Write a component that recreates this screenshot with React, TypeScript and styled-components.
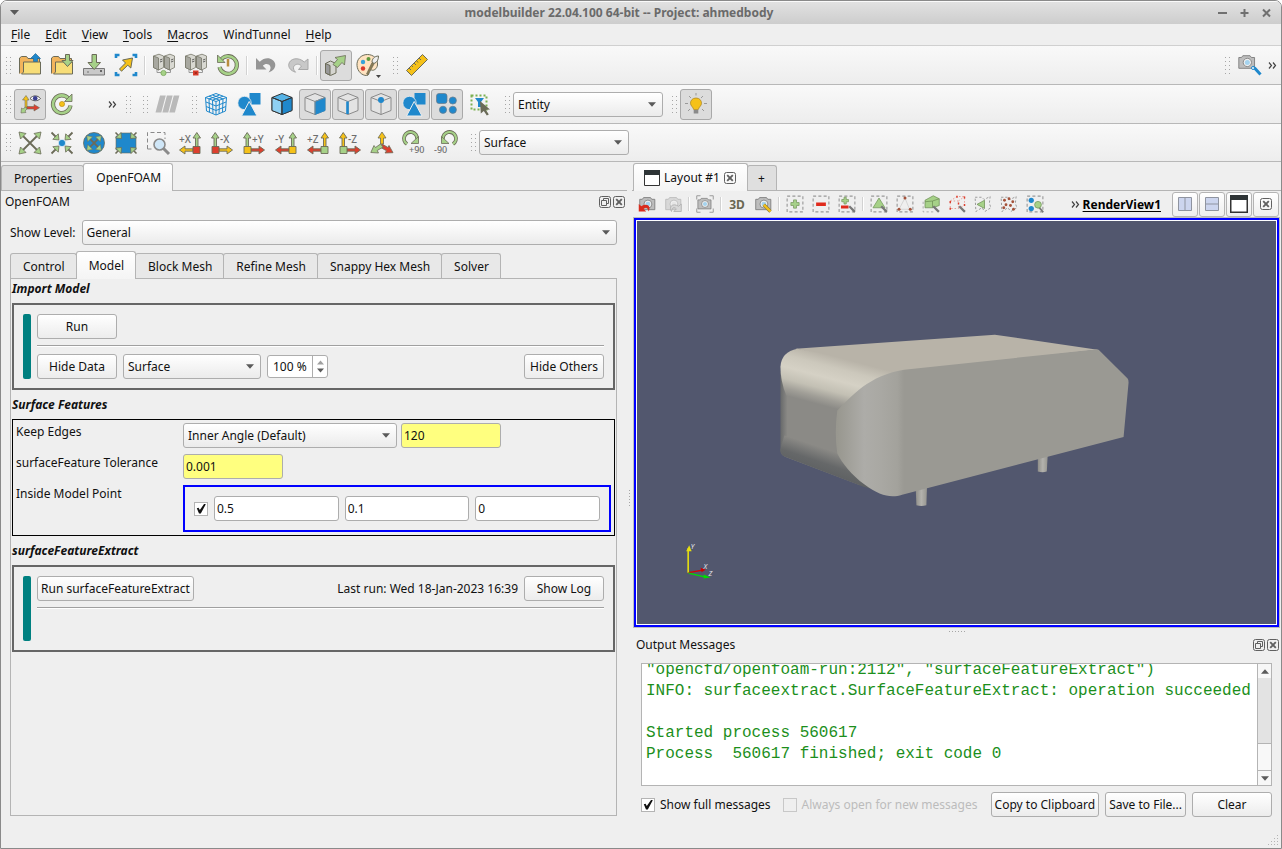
import React from "react";
import styled, { createGlobalStyle, css } from "styled-components";

const SANS = '"Noto Sans", "Open Sans", sans-serif';

const GlobalStyle = createGlobalStyle`
  *, *::before, *::after { box-sizing: border-box; }
  body { margin: 0; background: #fff; }
  body, button, input, select { font-family: ${SANS}; font-size: 12px; color: #111; }
`;

/* ---------- window chrome ---------- */

const Window = styled.div`
  display: flex;
  flex-direction: column;
  min-height: 100vh;
  background: #efefef;
  border: 1px solid #8a8a8a;
  border-radius: 7px 7px 0 0;
  overflow: hidden;
`;

const TitleBar = styled.header`
  display: grid;
  grid-template-columns: 36px 1fr 80px;
  align-items: center;
  height: 23px;
  padding: 0 9px;
  background: linear-gradient(#e2e2e2, #cdcdcd);
  box-shadow: inset 0 1px #fafafa;
`;

const TitleText = styled.h1`
  margin: 0;
  font-size: 12px;
  line-height: 17px;
  font-weight: 700;
  text-align: center;
  color: #6a6a6a;
  white-space: nowrap;
`;

const TitleButtons = styled.div<{ $end?: boolean }>`
  display: flex;
  gap: 12px;
  justify-content: ${(p) => (p.$end ? "flex-end" : "flex-start")};
`;

const PlainButton = styled.button`
  display: inline-flex;
  align-items: center;
  justify-content: center;
  padding: 0;
  border: 0;
  background: none;
`;

const MenuBar = styled.nav`
  display: flex;
  align-items: center;
  height: 22px;
  padding: 0 10px;
  gap: 15px;
  border-bottom: 1px solid #d0d0d0;
`;

const MenuItem = styled(PlainButton)`
  line-height: 17px;
  u { text-underline-offset: 2px; }
`;

/* ---------- toolbars ---------- */

const ToolBar = styled.div<{ $h?: number }>`
  display: flex;
  align-items: center;
  height: ${(p) => p.$h ?? 39}px;
  background: linear-gradient(#f9f9f9, #ededed);
  border-bottom: 1px solid #b8b8b8;
`;

const Group = styled.div<{ $end?: boolean }>`
  display: flex;
  align-items: center;
  padding: 0 4px 0 5px;
  margin-left: ${(p) => (p.$end ? "auto" : "0")};
`;

const dots = css`
  background-image: conic-gradient(from 0deg at 1px 1px, transparent 75%, #a6a6a6 0);
`;

const Handle = styled.span`
  width: 5px;
  height: 17px;
  margin-right: 3px;
  ${dots}
  background-size: 4px 4px;
`;

const ToolButton = styled.button<{ $on?: boolean }>`
  position: relative;
  display: flex;
  align-items: center;
  justify-content: center;
  width: 32px;
  height: 31px;
  padding: 0;
  border: 1px solid ${(p) => (p.$on ? "#a9a9a9" : "transparent")};
  border-radius: 3px;
  background: ${(p) => (p.$on ? "#dcdcdc" : "none")};
`;

const MenuMark = styled.svg`
  position: absolute;
  right: 2px;
  bottom: 2px;
`;

const Divider = styled.span<{ $h?: number }>`
  width: 2px;
  height: ${(p) => p.$h ?? 19}px;
  margin: 0 2px;
  background: linear-gradient(90deg, #d2d2d2 50%, #fff 50%);
`;

const Overflow = styled(PlainButton)<{ $wide?: boolean }>`
  width: ${(p) => (p.$wide ? 39 : 12)}px;
  justify-content: flex-end;
`;

const SelectBox = styled.span<{ $w?: number }>`
  display: inline-grid;
  align-items: center;
  ${(p) => (p.$w ? `width: ${p.$w}px;` : "flex: 1;")}
  > * { grid-area: 1 / 1; }
  > svg { justify-self: end; margin-right: 7px; pointer-events: none; }
`;

const frame = css`
  height: 25px;
  border: 1px solid #adadad;
  border-radius: 3px;
`;

const NativeSelect = styled.select`
  ${frame}
  appearance: none;
  width: 100%;
  padding: 0 22px 0 4px;
  background: linear-gradient(#fff, #ebebeb);
`;

const Button = styled.button`
  ${frame}
  flex: none;
  min-width: 80px;
  padding: 0 3px;
  background: linear-gradient(#fff, #ececec);
  white-space: nowrap;
`;

const TextField = styled.input<{ $default?: boolean }>`
  ${frame}
  ${(p) => (p.$default ? "width: 100px;" : "width: 0; flex: 1;")}
  padding: 0 2px;
  background: ${(p) => (p.$default ? "#ffff7f" : "#fff")};
`;

const Check = styled.input`
  appearance: none;
  display: grid;
  place-items: center;
  flex: none;
  width: 14px;
  height: 14px;
  margin: 0;
  border: 1px solid #b4b4b4;
  background: #fff;
  &:disabled { background: #efefef; border-color: #c8c8c8; }
  &:checked::before {
    content: "";
    width: 10px;
    height: 10px;
    background: #111;
    clip-path: polygon(8% 48%, 26% 42%, 38% 66%, 82% 2%, 98% 8%, 48% 100%, 30% 100%);
  }
`;

/* ---------- docks ---------- */

const Main = styled.main`
  flex: 1;
  display: grid;
  grid-template-columns: minmax(0, 626fr) 5px minmax(0, 649fr);
  padding-top: 1px;
`;

const Column = styled.section`
  display: flex;
  flex-direction: column;
  min-width: 0;
`;

const SideSplitter = styled.div`
  align-self: center;
  justify-self: center;
  width: 1px;
  height: 16px;
  margin-bottom: 16px;
  ${dots}
  background-size: 3px 3px;
`;

const Splitter = styled.div`
  height: 6px;
  padding-top: 3px;
  &::before {
    content: "";
    display: block;
    width: 16px;
    height: 1px;
    margin: 0 auto;
    ${dots}
    background-size: 3px 3px;
  }
`;

const TabStrip = styled.div<{ $indent?: boolean }>`
  display: flex;
  align-items: flex-end;
  height: 28px;
  padding-left: ${(p) => (p.$indent ? 1 : 0)}px;
  border-bottom: 1px solid #b4b4b4;
`;

const Tab = styled.button<{ $on?: boolean; $soft?: boolean; $tight?: boolean }>`
  display: flex;
  align-items: center;
  height: ${(p) => (p.$on ? 28 : 25)}px;
  margin: 0 -1px ${(p) => (p.$on ? "-1px" : "0")} 0;
  padding: ${(p) => (p.$tight ? "0 11px 0 10px" : "0 11px 0 12px")};
  border: 1px solid #b4b4b4;
  border-bottom: 0;
  border-radius: 3px 3px 0 0;
  background: ${(p) => (p.$on ? "linear-gradient(#fff, #f4f4f4)" : p.$soft ? "#e8e8e8" : "#dfdfdf")};
  white-space: nowrap;
  z-index: ${(p) => (p.$on ? 1 : 0)};
`;

const DockTitle = styled.div`
  display: flex;
  align-items: center;
  gap: 2px;
  height: 21px;
  padding: 0 2px 0 4px;
  > span { flex: 1; line-height: 17px; }
`;

const DockBody = styled.div`
  flex: 1;
  display: flex;
  flex-direction: column;
  padding: 8px 10px 32px 9px;
`;

const LevelRow = styled.label`
  display: flex;
  align-items: center;
  gap: 6px;
  margin-bottom: 6px;
`;

const Pane = styled.div`
  flex: 1;
  border: 1px solid #b4b4b4;
  border-top: 0;
  padding: 0 1px;
`;

const SectionTitle = styled.h2<{ $first?: boolean }>`
  margin: 0;
  padding: ${(p) => (p.$first ? 1 : 6)}px 0 5px;
  font-size: 12px;
  line-height: 18px;
  font-weight: 700;
  font-style: italic;
  color: #111;
`;

const OperationBox = styled.div`
  display: flex;
  gap: 6px;
  padding: 9px;
  border: 2px solid #666;
`;

const StatusBarMark = styled.div`
  width: 8px;
  min-height: 65px;
  border-radius: 2px;
  background: #008080;
`;

const OperationBody = styled.div`
  flex: 1;
`;

const Row = styled.div<{ $gap?: number }>`
  display: flex;
  align-items: center;
  gap: ${(p) => p.$gap ?? 6}px;
`;

const Fill = styled.span`
  flex: 1;
`;

const Rule = styled.hr`
  height: 2px;
  margin: 6px 0 7px;
  border: 0;
  background: linear-gradient(#a0a0a0 50%, #fff 50%);
`;

const Spin = styled.label`
  display: grid;
  grid-template-columns: 1fr 15px;
  width: 61px;
  height: 23px;
  border: 1px solid #adadad;
  border-radius: 3px;
  background: #fff;
  overflow: hidden;
`;

const SpinInput = styled.input`
  min-width: 0;
  padding: 0 0 0 5px;
  border: 0;
  background: none;
`;

const SpinArrows = styled.span`
  display: flex;
  flex-direction: column;
  align-items: center;
  justify-content: space-evenly;
  border-left: 1px solid #adadad;
`;

const Attributes = styled.div`
  display: grid;
  grid-template-columns: 167px 1fr;
  row-gap: 6px;
  padding: 3px;
  border: 1px solid #000;
`;

const AttrLabel = styled.label`
  line-height: 17px;
`;

const PointBox = styled.div`
  display: flex;
  align-items: center;
  gap: 6px;
  padding: 9px;
  border: 2px solid #00f;
`;

/* ---------- render view ---------- */

const ViewTools = styled.div`
  display: flex;
  align-items: center;
  height: 26px;
  padding: 0 2px;
`;

const SmallTool = styled(PlainButton)`
  width: 26px;
  height: 26px;
  color: #6a6752;
  font-weight: 700;
`;

const ViewName = styled.a`
  margin: 0 10px 0 3px;
  font-weight: 700;
  color: #000;
  text-underline-offset: 2px;
`;

const LayoutButton = styled.button`
  display: flex;
  align-items: center;
  justify-content: center;
  width: 26px;
  height: 25px;
  margin-left: 1px;
  padding: 0;
  border: 1px solid #b4b4b4;
  border-radius: 3px;
  background: linear-gradient(#fff, #eee);
`;

const ViewFrame = styled.div`
  flex: 1;
  display: flex;
  min-height: 200px;
  margin: 0 1px;
  border: 1px solid #bcbcbc;
`;

const ViewActive = styled.div`
  flex: 1;
  display: flex;
  border: 2px solid #00f;
`;

const Canvas = styled.div`
  flex: 1;
  display: grid;
  contain: size;
  border: 1px solid #fff;
  background: #52576e;
  > svg { width: 100%; height: 100%; min-height: 0; }
`;

/* ---------- output messages ---------- */

const OutputDock = styled.div`
  position: relative;
`;

const Output = styled.div`
  padding: 8px 9px 31px;
`;

const LogBox = styled.div`
  display: flex;
  height: 123px;
  margin-bottom: 6px;
  border: 1px solid #b4b4b4;
  background: #fff;
`;

const LogView = styled.div`
  flex: 1;
  min-width: 0;
  display: flex;
  flex-direction: column;
  justify-content: flex-end;
  overflow: hidden;
`;

const LogText = styled.pre`
  margin: 0 0 -1px;
  padding-left: 4px;
  font-family: "Liberation Mono", monospace;
  font-size: 16px;
  line-height: 21px;
  color: #1c8f1c;
`;

const ScrollBar = styled.div`
  display: flex;
  flex-direction: column;
  width: 14px;
  border-left: 1px solid #b4b4b4;
  background: #e3e3e3;
`;

const ScrollArrow = styled(PlainButton)`
  height: 14px;
  background: #f7f7f7;
`;

const ScrollThumb = styled.div`
  height: 28px;
  margin-top: auto;
  background: #f8f8f8;
  border: solid #b4b4b4;
  border-width: 1px 0;
`;

const CheckLabel = styled.label<{ $off?: boolean }>`
  display: flex;
  align-items: center;
  gap: 5px;
  color: ${(p) => (p.$off ? "#bcbcbc" : "#111")};
  white-space: nowrap;
`;

const OutputActions = styled.div`
  display: flex;
  justify-content: space-between;
`;

const Grip = styled.svg`
  position: absolute;
  right: 2px;
  bottom: 2px;
`;

/* ---------- icons ---------- */

const Drawing = styled.svg`
  overflow: visible;
`;

const O = "#6b6b58";
const GREEN = "#a6d188";
const YEL = "#f5c119";
const RED = "#dd3f2e";
const BLUE = "#1f88cc";

const Icon = ({ children, s = 24 }: { children: React.ReactNode; s?: number }) => (
  <Drawing width={s} height={s} viewBox="0 0 24 24" fill="none" aria-hidden="true">
    {children}
  </Drawing>
);

const Folder = () => (
  <>
    <path d="M1.500 20.500V5l2-1.500h5l1.500 2h11.500v5" fill="#f2b45c" stroke={O} />
    <path d="M1.500 20.500L5.500 9.500H22.500V20.500z" fill="#f2b45c" stroke="none" />
    <path d="M5.500 9h17v12h-19l2-2z" fill="#f7dd78" stroke={O} />
  </>
);

const OpenIcon = () => (
  <Icon>
    <Folder />
    <path d="M15.500 8.500V5.500h-3L17.500.500l5 5h-3v3z" fill={BLUE} stroke="#2a6a94" strokeWidth=".7" />
  </Icon>
);
const ImportIcon = () => (
  <Icon>
    <Folder />
    <path d="M15.500 1.500h4v6h3.500L17.500 13.500 12 7.500h3.500z" fill={GREEN} stroke={O} />
  </Icon>
);
const SaveIcon = () => (
  <Icon>
    <path d="M1.500 15.500h21v6.500h-21z" fill="#c9c9c9" stroke="#777" />
    <path d="M18 18h2" stroke="#666" strokeWidth="2" />
    <circle cx="6" cy="19" r=".8" fill="#666" />
    <path d="M10 1.500h4.500v8H18.500L12.200 16.500 6 9.500h4z" fill={GREEN} stroke={O} />
  </Icon>
);
const FitIcon = () => (
  <Icon>
    <path d="M2 5V2H5.500M18.500 2h3.500V5M2 19v3H5.500M18.500 22h3.500V19" stroke={BLUE} strokeWidth="2.600" />
    <path d="M5.500 16L11.500 10 8.500 7l10-2-1.700 10-3-2.800-6.300 6z" fill={YEL} stroke={O} />
  </Icon>
);
const ServerPair = ({ ok }: { ok: boolean }) => (
  <Icon>
    {[1, 12].map((x) => (
      <g key={x} transform={`translate(${x} 0)`} stroke="#77776a" strokeWidth=".8">
        <path d="M.500 3L6 1.200 10.500 3v11.500L5.500 17 .500 14.500z" fill="#d9d9d2" />
        <path d="M.500 3l5 2v12L.500 14.500z" fill="#a8a8a0" />
        <path d="M7 7l2.500-1M7 9l2.500-1" stroke="#444" />
      </g>
    ))}
    <path d="M5 16.500v3h13.500v-3" stroke="#999" />
    {ok ? (
      <circle cx="11.500" cy="20" r="2.600" fill={GREEN} stroke="#7aa85c" strokeWidth=".8" />
    ) : (
      <>
        <path d="M9 17.500h5.500v5H9z" fill={RED} />
        <path d="M10.500 18.800l2.500 2.500m0-2.500l-2.500 2.500" stroke="#8a1c12" strokeWidth=".8" />
      </>
    )}
  </Icon>
);
const TimeIcon = () => (
  <Icon>
    <path d="M4.500 7.500A8.800 8.800 0 1 1 3.500 14" stroke={O} strokeWidth="4.200" />
    <path d="M4.500 7.500A8.800 8.800 0 1 1 3.500 14" stroke={GREEN} strokeWidth="2.600" />
    <path d="M1.500 2V9.500h7.500z" fill={GREEN} stroke={O} strokeWidth=".8" />
    <path d="M12 6v7.500" stroke="#b98d3e" strokeWidth="2.500" />
  </Icon>
);
const UndoIcon = () => (
  <Icon>
    <path d="M2 5v11.500h10.500L8.800 12.800c2.400-2.500 5.800-2.300 7.300.2 1 1.900.3 4-1.600 6.500 5-1.500 7.300-5 6.700-8.400C20.200 5.500 12 2.500 5.700 8.700z" fill="#959595" />
  </Icon>
);
const RedoIcon = () => (
  <Icon>
    <path transform="matrix(-1 0 0 1 24 0)" d="M2 6v10.500h9.500L8.500 13c2.400-2.500 5.800-2.300 7.600.2 1 1.900.3 4-1.600 6 5-1.500 7.300-5 6.700-8C20.200 5.500 12 3.500 5.700 9z" fill="#c8c8c8" stroke="#a8a8a8" />
  </Icon>
);
const ExportBoxIcon = () => (
  <Icon>
    <path d="M1.500 10.500l5-2.500 5.500 2.500v9.500l-5.500 2.500-5-2.500z" fill="#d5d5d0" stroke={O} />
    <path d="M1.500 10.500l4.500 2v9.500l-4.500-2z" fill="#999" stroke={O} />
    <path d="M9 11.500l4.500-5-2.500-2 10.500-2-1 9.500-2.500-2.500-4.500 5z" fill={GREEN} stroke={O} strokeWidth=".8" />
  </Icon>
);
const PaletteIcon = () => (
  <Icon>
    <path d="M11.500 1.500C5 1.500.500 6.500 1 12.500c.5 6 5 10 9.500 10 2.500 0 2.500-2 2-3.500s1-3 3-2 5.500-1 6-5c.5-6-4-10.500-10-10.500z" fill="#ffe3c0" stroke={O} />
    <circle cx="7" cy="9" r="2.200" fill="#36a3d9" />
    <circle cx="12.500" cy="6" r="2" fill="#5e9a3c" />
    <circle cx="7" cy="15.500" r="2.200" fill="#d8392b" />
    <path d="M22.500 3c-4 0-6.500 3-6.500 6l2 1.500c3-1 4.500-3.500 4.500-7.500z" fill="#eee" stroke={O} />
    <path d="M16 9.500l2 1.500-6 11-1.500-1z" fill="#8c7a50" stroke={O} strokeWidth=".7" />
  </Icon>
);
const RulerIcon = () => (
  <Icon>
    <path d="M1.500 17.500L17.500 1.500l5 5-16 16z" fill={YEL} stroke={O} />
    <path d="M4 15l2 2m.500-4.500l1.500 1.500m1-4l2 2m.500-4.500L13 9.500m1-4.500l2 2" stroke={O} />
  </Icon>
);
const CameraShape = ({ dim }: { dim?: boolean }) => (
  <g opacity={dim ? 0.45 : 1}>
    <path d="M2 5h3l1.500-2h8L16 5h3.500v12H2z" fill="#bdbdbd" stroke="#7c7c7c" />
    <circle cx="11.500" cy="10.500" r="4.600" fill="#f0f0f0" stroke="#808080" />
    <circle cx="11.500" cy="10.500" r="2.800" fill={dim ? "#ddd" : "#a5d3ee"} />
  </g>
);
const CameraLinkIcon = () => (
  <Icon>
    <g transform="translate(0 0) scale(.9)"><CameraShape /></g>
    <path d="M15.500 14l2.500 1.500 5.500 6" stroke={BLUE} strokeWidth="3" />
    <circle cx="16" cy="15" r="1.500" fill="#fff" stroke={BLUE} />
  </Icon>
);
const AxesEyeIcon = () => (
  <Icon>
    <path d="M7 16V8H4.500L8 3.500 11 8H9v8z" fill={YEL} stroke={O} strokeWidth=".6" />
    <path d="M9 14.500h7v-2l5.500 3.200-5.500 3.300v-2H9z" fill={RED} stroke={O} strokeWidth=".6" />
    <path d="M7.500 15l-2.500 2-1.500-1-.5 5 5-.5-1-1.500 2-2z" fill={GREEN} stroke={O} strokeWidth=".6" />
    <path d="M12 6.500c3-3.500 7.500-3.500 10.500 0-3 3-7.500 3-10.500 0z" fill="#fff" stroke="#555" />
    <circle cx="17.200" cy="6.200" r="2.300" fill="#3a3f8f" />
  </Icon>
);
const ResetCenterIcon = () => (
  <Icon>
    <path d="M20.500 13.500a8.800 8.800 0 1 1-2-7" stroke={O} strokeWidth="4.200" />
    <path d="M20.500 13.500a8.800 8.800 0 1 1-2-7" stroke={GREEN} strokeWidth="2.600" />
    <path d="M22 2V9.500h-7.500z" fill={GREEN} stroke={O} strokeWidth=".8" />
    <circle cx="12" cy="12" r="2.600" fill={YEL} stroke="#b48a10" strokeWidth=".6" />
  </Icon>
);
const StripesIcon = () => (
  <Icon>
    <path d="M5 3.500h5.800L6.300 20.500H.500zM11.900 3.500h5.800l-4.500 17H7.400zM18.800 3.500h5.600l-4.500 17h-5.600z" fill="#b9b9b9" />
  </Icon>
);
const GridCubeIcon = () => (
  <Icon>
    <path d="M1.500 5.500L12 1.500l10.500 4-1 13.500-9.500 4-9.500-4zM1.500 5.500L12 9.500l10.500-4M12 9.500V23M5 7l.500 13M8.500 8.300L9 21.500M19 7l-.500 13M15.500 8.300L15 21.500M2 10l10 4 10-4M2.200 14.500l9.800 4 9.800-4M5 4.200l10.500 4M8.500 3L19 7M19 4.200l-10.500 4M15.500 3L5 7" stroke={BLUE} />
  </Icon>
);
const ShapesIcon = () => (
  <Icon>
    <path d="M12.500 1h11v11.500h-11z" fill={BLUE} />
    <circle cx="7.500" cy="11" r="6.700" fill={BLUE} stroke="#eee" strokeWidth=".8" />
    <path d="M12.200 9.500L20 24H4.500z" fill={BLUE} stroke="#eee" />
  </Icon>
);
const CubeIcon = ({ kind }: { kind: "solid" | "face" | "edge" | "vertex" }) => {
  const solid = kind === "solid";
  const line = solid ? "#333" : "#8a8a8a";
  return (
    <Icon>
      <path d="M2 5.500L12 1.500l10 4v13L12 22.500l-10-4z" fill={solid ? "#56b3e6" : "#e3e3e3"} stroke={line} />
      {solid && <path d="M2 5.500L12 9.500v13L2 18.500z" fill="#8fd0f2" stroke={line} />}
      {(solid || kind === "face") && <path d="M12 9.500l10-4v13L12 22.500z" fill={BLUE} stroke={solid ? "#333" : BLUE} strokeWidth=".8" />}
      <path d="M2 5.500L12 9.500l10-4M12 9.500v13" stroke={line} />
      {kind === "edge" && <path d="M11.500 9.500V22" stroke={BLUE} strokeWidth="2.600" />}
      {kind === "vertex" && <circle cx="12" cy="8" r="3" fill={BLUE} />}
    </Icon>
  );
};
const BlocksIcon = () => (
  <Icon>
    <g fill={BLUE} stroke="#6a7a88" strokeWidth=".7">
      <rect x="1.500" y="1.500" width="10.500" height="10" rx="2.500" />
      <circle cx="17.800" cy="8.500" r="3.600" />
      <circle cx="8" cy="17.800" r="3.600" />
      <circle cx="17.800" cy="17.800" r="3.600" />
    </g>
  </Icon>
);
const SelectFilterIcon = () => (
  <Icon>
    <path d="M3.500 3.500h15v14h-15z" stroke="#7db052" strokeWidth="2" strokeDasharray="2 2" />
    <path d="M7 6h9l-3 4v5h-3v-5z" fill={BLUE} />
    <path d="M12 9l10 8.500-4.200.2 3 4.700-2 1-3-4.500-3 2.600z" fill={O} />
  </Icon>
);
const BulbIcon = () => (
  <Icon>
    <path d="M12 6c-3.800 0-5.500 2.700-5.500 5.200 0 2.800 2.700 3.800 3.200 6.300h4.600c.5-2.500 3.200-3.500 3.200-6.300C17.500 8.700 15.800 6 12 6z" fill={YEL} stroke="#b08a2a" strokeWidth=".8" />
    <path d="M9.700 18h4.600v3.500H9.700z" fill="#8a8a8a" />
    <path d="M12 1v2.500M5 4l2 2M19 4l-2 2M1 11.500h3M20 11.500h3M4 19l2-2M20 19l-2-2" stroke="#999" />
  </Icon>
);

const HEADS = "M1 1l7 1.500L2.500 8zM23 1l-7 1.500L21.500 8zM1 23l7-1.500L2.500 16zM23 23l-7-1.500 5.500-5.500z";
const INHEADS = "M9 9L2.800 8.300 8.300 2.800zM15 9l6.200-.7-5.500-5.500zM9 15l-6.200.7 5.500 5.500zM15 15l6.200.7-5.500 5.500z";

const ZoomDataIcon = () => (
  <Icon>
    <path d="M4 4l16 16M20 4L4 20" stroke={O} strokeWidth="1.800" />
    <path d={HEADS} fill={GREEN} stroke={O} strokeWidth=".8" />
  </Icon>
);
const ZoomCenterIcon = () => (
  <Icon>
    <path d="M1.500 1.500l5 5M22.500 1.500l-5 5M1.500 22.500l5-5M22.500 22.500l-5-5" stroke={O} strokeWidth="1.800" />
    <path d={INHEADS} fill={GREEN} stroke={O} strokeWidth=".8" />
    <circle cx="12" cy="12" r="3.600" fill={BLUE} stroke="#fff" strokeWidth=".6" />
  </Icon>
);
const ZoomCircleIcon = () => (
  <Icon>
    <circle cx="12" cy="12" r="10.500" fill={BLUE} stroke={O} strokeWidth=".8" />
    <g transform="translate(4 4) scale(.67)">
      <path d="M4 4l16 16M20 4L4 20" stroke={O} strokeWidth="2.600" />
      <path d="M1 1l9 1.500L2.500 10zM23 1l-9 1.500 7.500 7.500zM1 23l9-1.500L2.500 14zM23 23l-9-1.500 7.500-7.500z" fill={GREEN} stroke={O} strokeWidth=".8" />
    </g>
  </Icon>
);
const ZoomSquareIcon = () => (
  <Icon>
    <path d="M2 5h3.500l1-3h11l1 3H22v14h-3.500l-1 3h-11l-1-3H2z" fill={BLUE} stroke={O} strokeWidth=".6" />
    <path d="M1.500 1.500l4 4M22.500 1.500l-4 4M1.500 22.500l4-4M22.500 22.500l-4-4" stroke={O} strokeWidth="1.600" />
    <path d="M7.500 7.500L1.500 7 7 1.500zM16.500 7.500l6-.5L17 1.500zM7.500 16.500l-6 .5L7 22.500zM16.500 16.500l6 .5-5.500 5.500z" fill={GREEN} stroke={O} strokeWidth=".8" />
  </Icon>
);
const ZoomBoxIcon = () => (
  <Icon>
    <path d="M1.500 18V1.500H19V8M1.500 18H6" stroke="#8a8a8a" strokeDasharray="4 2.500" />
    <path d="M17 17l6 6" stroke="#8a8a8a" strokeWidth="3" />
    <circle cx="13.500" cy="13.500" r="5.500" fill="#cfe6f7" stroke="#8a8a8a" strokeWidth="1.600" />
  </Icon>
);

type AxisProps = { label: string; flip?: boolean; up: string; side: string; dot: string };
const AxisIcon = ({ label, flip, up, side, dot }: AxisProps) => (
  <Icon>
    <g transform={flip ? "translate(24 0) scale(-1 1)" : undefined} stroke={O} strokeWidth=".9">
      <path d="M17.500 16V7h-2.500L18.800 1.500 22.500 7h-2.500v9z" fill={up} />
      <path d="M15 17.800H7V15L1.500 19 7 23v-2.800h8z" fill={side} />
      <path d="M15 15.500h7v7h-7z" fill={dot} />
    </g>
    <text x={flip ? 10 : 1} y="12" fontSize="10" fontWeight="500" fontFamily={SANS} fill="#6e6e6e">
      {label}
    </text>
  </Icon>
);
const IsoIcon = () => (
  <Icon>
    <g stroke={O} strokeWidth=".8">
      <path d="M10.500 13V7H8l4-6 4 6h-2.500v6z" fill={YEL} />
      <path d="M12 13l6 3.500 1-2 4 7.200-8 .3 1.500-2.200-6-3.500z" fill={RED} />
      <path d="M10.500 13l-5 3.500-1.500-2L.800 21.500l7.700.500-1.300-2.500 6-3.500z" fill={GREEN} />
    </g>
  </Icon>
);
const RotateIcon = ({ label, flip }: { label: string; flip?: boolean }) => (
  <Icon>
    <g transform={flip ? "translate(24 0) scale(-1 1)" : undefined}>
      <path d="M5 13A6.500 6.500 0 1 1 15 8" stroke={O} strokeWidth="3.800" />
      <path d="M5 13A6.500 6.500 0 1 1 15 8" stroke={GREEN} strokeWidth="2.200" />
      <path d="M9 12.500h7.500V5.500z" fill={GREEN} stroke={O} strokeWidth=".8" />
    </g>
    <text x={flip ? 0 : 7} y="22" fontSize="9" fontWeight="500" fontFamily={SANS} fill="#6e6e6e">
      {label}
    </text>
  </Icon>
);

const ViewCamera = ({ kind }: { kind: "undo" | "redo" | "grab" | "adjust" }) => (
  <Icon s={18}>
    {kind === "grab" && <path d="M1 6V1h5M18 1h5v5M1 18v5h5M18 23h5v-5" stroke="#999" strokeWidth="1.300" />}
    <g transform={kind === "grab" ? "translate(.5 1.500)" : "scale(1.150)"}>
      <CameraShape dim={kind === "redo"} />
    </g>
    {kind === "undo" && <path d="M1 12v10h10l-3.500-3.500c3-3 6-2 6.500 3.500 4-6-1-12-9.500-7z" fill="#d92c1e" />}
    {kind === "redo" && <path transform="translate(24 0) scale(-1 1)" d="M1 12v10h10l-3.500-3.500c3-3 6-2 6.500 3.500 4-6-1-12-9.500-7z" fill="#d8d8d8" stroke="#aaa" />}
    {kind === "adjust" && (
      <>
        <path d="M13 13l9 9" stroke="#8a7a3a" strokeWidth="4.500" />
        <path d="M13 13l9 9" stroke={YEL} strokeWidth="3" />
      </>
    )}
  </Icon>
);

const DashedBox = () => (
  <path d="M1.500 1.500h21v21h-21z" stroke="#999" strokeWidth="1.500" strokeDasharray="4 3" />
);
const Lens = () => <path d="M15 15l7.500 7.500" stroke="#777" strokeWidth="3" />;

type PickKind = "plus" | "minus" | "toggle" | "cell" | "point" | "through" | "throughPts" | "poly" | "polyPts" | "block";
const PickIcon = ({ kind }: { kind: PickKind }) => (
  <Icon s={18}>
    {kind !== "poly" && kind !== "polyPts" && kind !== "through" && kind !== "throughPts" && <DashedBox />}
    {kind === "plus" && <path d="M10 6.500h4V10h3.500v4H14v3.500h-4V14H6.500v-4H10z" fill={GREEN} stroke="#7a9a60" />}
    {kind === "minus" && <path d="M5.500 10h13v4.500h-13z" fill="#e02a1c" />}
    {kind === "toggle" && (
      <>
        <path d="M8 3h3v3h3v3h-3v3H8V9H5V6h3z" fill={GREEN} stroke="#7a9a60" />
        <path d="M4 14h10v4H4z" fill="#e02a1c" />
        <Lens />
      </>
    )}
    {kind === "cell" && (
      <>
        <path d="M12 4l8 13H4z" fill={GREEN} stroke="#71985a" />
        <Lens />
      </>
    )}
    {kind === "point" && (
      <>
        <path d="M12 4L4 19h14z" stroke="#ccc" />
        <circle cx="12" cy="4" r="2" fill="#a4523a" />
        <circle cx="4" cy="19" r="2" fill="#a4523a" />
        <circle cx="19" cy="19" r="2" fill="#a4523a" />
      </>
    )}
    {kind === "through" && (
      <>
        <path d="M1.500 9v13.500H16" stroke="#999" strokeDasharray="3 3" />
        <path d="M4 7l11-6 8 4v9l-9 3H4z" fill={GREEN} stroke="#6d8f55" />
        <path d="M4 9l10-1 9-3M14 8v9" stroke="#6d8f55" />
        <Lens />
      </>
    )}
    {kind === "throughPts" && (
      <>
        <path d="M3 8l9-6h10v12l-8 4H3zM3 8h11v10M14 8l8-6" stroke="#e89a92" strokeDasharray="2 2.500" strokeWidth="1.300" />
        <path d="M12 1v2.500M22 2v2.500M3 8v2.500M14 10v2.500M22 12v2.500M3 17v2.500" stroke={RED} strokeWidth="2" />
        <Lens />
      </>
    )}
    {(kind === "poly" || kind === "polyPts") && (
      <path d="M1.500 3h9l3 3 8-4-1 9 2 6-8 5-4-5-8 5z" stroke="#999" strokeWidth="1.300" strokeDasharray="3 2.500" />
    )}
    {kind === "poly" && <path d="M4 12.500L14 7v11z" fill={GREEN} stroke="#6d8f55" />}
    {kind === "polyPts" &&
      [[6, 7], [12, 5], [17, 9], [8, 13], [14, 14], [18, 19], [5, 17]].map(([x, y]) => (
        <circle key={`${x}-${y}`} cx={x} cy={y} r="1.900" fill="#a4523a" />
      ))}
    {kind === "block" && (
      <>
        <circle cx="7" cy="7" r="3.500" fill={BLUE} />
        <circle cx="7" cy="18" r="3.500" fill={BLUE} />
        <path d="M17 16l6 7" stroke="#777" strokeWidth="2.500" />
        <circle cx="16" cy="13" r="4.500" fill={GREEN} stroke="#71985a" />
      </>
    )}
  </Icon>
);

const Caret = ({ up, dim, w = 9 }: { up?: boolean; dim?: boolean; w?: number }) => (
  <svg width={w} height="5" viewBox="0 0 9 5" aria-hidden="true">
    <path d={up ? "M0 5L4.500 0 9 5z" : "M0 0h9L4.500 5z"} fill={dim ? "#a0a0a0" : "#5a5a5a"} />
  </svg>
);
const Chevrons = () => (
  <svg width="9" height="7" viewBox="0 0 9 7" fill="none" stroke="#444" strokeWidth="1.200" aria-hidden="true">
    <path d="M1 .500l2.500 3L1 6.500M5 .500l2.500 3L5 6.500" />
  </svg>
);
const CloseBox = () => (
  <svg width="12" height="12" viewBox="0 0 12 12" fill="none" stroke="#606060" aria-hidden="true">
    <rect x=".500" y=".500" width="11" height="11" rx="2" />
    <path d="M3.200 3.200l5.600 5.600M8.800 3.200L3.200 8.800" strokeWidth="1.900" />
  </svg>
);
const FloatBox = () => (
  <svg width="12" height="12" viewBox="0 0 12 12" fill="none" stroke="#606060" aria-hidden="true">
    <rect x=".500" y=".500" width="11" height="11" rx="2" />
    <path d="M4.500 4.500v-2h5v5h-2M2.500 4.500h5v5h-5z" />
  </svg>
);

const AhmedBody = () => (
  <svg viewBox="637 221 639 404" role="img" aria-label="Ahmed body model">
    <defs>
      <linearGradient id="sideShade" gradientUnits="userSpaceOnUse" x1="837" y1="0" x2="904" y2="0">
        <stop offset="0" stopColor="#98978f" />
        <stop offset=".4" stopColor="#adaca8" />
        <stop offset=".65" stopColor="#a9a8a3" />
        <stop offset=".9" stopColor="#a3a29c" />
        <stop offset="1" stopColor="#9a9993" />
      </linearGradient>
      <linearGradient id="roofCurve" gradientUnits="userSpaceOnUse" x1="847" y1="360" x2="834" y2="409">
        <stop offset="0" stopColor="#b8b3a8" />
        <stop offset=".22" stopColor="#ccc8bc" />
        <stop offset=".45" stopColor="#d5d1c5" />
        <stop offset=".68" stopColor="#c3c0b4" />
        <stop offset=".86" stopColor="#a09e97" />
        <stop offset="1" stopColor="#8b8a86" />
      </linearGradient>
      <linearGradient id="floorCurve" gradientUnits="userSpaceOnUse" x1="812" y1="445" x2="803" y2="472">
        <stop offset="0" stopColor="#8b8a86" />
        <stop offset=".5" stopColor="#666869" />
        <stop offset="1" stopColor="#5b5e60" />
      </linearGradient>
      <linearGradient id="noseEdge" gradientUnits="userSpaceOnUse" x1="780" y1="0" x2="787" y2="0">
        <stop offset="0" stopColor="#67696a" />
        <stop offset="1" stopColor="#8b8a86" />
      </linearGradient>
      <linearGradient id="legShade">
        <stop offset="0" stopColor="#8f8e89" />
        <stop offset=".5" stopColor="#b3b2ad" />
        <stop offset="1" stopColor="#96958f" />
      </linearGradient>
    </defs>
    <path d="M915.500 485h11.500l-.7 21q-5 1.500-10 0z" fill="url(#legShade)" />
    <path d="M1038 455h10l-1 17q-4 1.500-9 0z" fill="url(#legShade)" />
    <path d="M780 372V451Q780 455 784 457L860 486 840 400z" fill="url(#noseEdge)" />
    <path d="M784 436L838 452 872 490 862 487 784 457Q780 455 780 450z" fill="url(#floorCurve)" />
    <path d="M795 349L995 335 1098 350 900 372z" fill="#b8b3a8" />
    <path d="M797 349L905 370 870 395 837 412 786 396Q780 382 780 367 781 352 797 349z" fill="url(#roofCurve)" />
    <path d="M904 370L1094 350Q1098 349 1100 351L1128 379Q1129 380 1129 383L1124 437.500 902 495.500C891 499 880 497 864 485 851 475 842 464 837 454Q834 433 837 411C852 396 868 376 904 370z" fill="url(#sideShade)" />
    <g fill="none" strokeWidth="1.300">
      <path d="M687.500 573.500V549" stroke="#e6df10" strokeWidth="1.600" />
      <path d="M685.500 552l3-6 2.500 6z" fill="#e6df10" />
      <path d="M688 573.500l14-2.500" stroke="#d00" />
      <path d="M700 568.500l5 2-4 2.500z" fill="#c00" />
      <path d="M688 574l17 4" stroke="#0d0" />
      <path d="M703 575.500l7 3-7 1z" fill="#0d0" />
    </g>
    <g fill="#e4e4ea" fontFamily={SANS} fontSize="7" fontStyle="italic">
      <text x="690" y="550">Y</text>
      <text x="703" y="570">X</text>
      <text x="708" y="577">Z</text>
    </g>
  </svg>
);

/* ---------- composition ---------- */

const Select = ({ label, value, w, id }: { label?: string; value: string; w?: number; id?: string }) => (
  <SelectBox $w={w}>
    <NativeSelect id={id} aria-label={label} defaultValue={value}>
      <option>{value}</option>
    </NativeSelect>
    <Caret w={8} />
  </SelectBox>
);

const Tool = ({ name, on, children }: { name: string; on?: boolean; children: React.ReactNode }) => (
  <ToolButton type="button" aria-label={name} title={name} $on={on}>
    {children}
  </ToolButton>
);

const MENUS: [string, string][] = [
  ["F", "ile"], ["E", "dit"], ["V", "iew"], ["T", "ools"], ["M", "acros"], ["", "WindTunnel"], ["H", "elp"],
];

const FOAM_TABS = ["Control", "Model", "Block Mesh", "Refine Mesh", "Snappy Hex Mesh", "Solver"];

const AXES: AxisProps[] = [
  { label: "+X", up: GREEN, side: YEL, dot: RED },
  { label: "-X", flip: true, up: GREEN, side: YEL, dot: RED },
  { label: "+Y", flip: true, up: GREEN, side: RED, dot: YEL },
  { label: "-Y", up: GREEN, side: RED, dot: YEL },
  { label: "+Z", up: YEL, side: RED, dot: GREEN },
  { label: "-Z", flip: true, up: YEL, side: RED, dot: GREEN },
];

const DockButtons = () => (
  <>
    <PlainButton type="button" aria-label="Float panel"><FloatBox /></PlainButton>
    <PlainButton type="button" aria-label="Close panel"><CloseBox /></PlainButton>
  </>
);

const Pick = ({ kind }: { kind: PickKind }) => (
  <SmallTool type="button" aria-label={`Select ${kind}`}><PickIcon kind={kind} /></SmallTool>
);

export default function App() {
  return (
    <>
      <GlobalStyle />
      <Window>
        <TitleBar>
          <TitleButtons>
            <PlainButton type="button" aria-label="Window menu"><Caret /></PlainButton>
          </TitleButtons>
          <TitleText>modelbuilder 22.04.100 64-bit -- Project: ahmedbody</TitleText>
          <TitleButtons $end>
            {["M0 5h9", "M0.500 5h8M4.500 1v8", "M1 1.500l7 7M8 1.500l-7 7"].map((d, i) => (
              <PlainButton key={d} type="button" aria-label={["Minimize", "Maximize", "Close"][i]}>
                <svg width="10" height="10" viewBox="0 0 10 10" fill="none" stroke="#707070" strokeWidth="2"><path d={d} /></svg>
              </PlainButton>
            ))}
          </TitleButtons>
        </TitleBar>

        <MenuBar>
          {MENUS.map(([key, rest]) => (
            <MenuItem key={rest} type="button">
              <span><u>{key}</u>{rest}</span>
            </MenuItem>
          ))}
        </MenuBar>

        <ToolBar>
          <Group>
            <Handle />
            <Tool name="Open"><OpenIcon /></Tool>
            <Tool name="Import"><ImportIcon /></Tool>
            <Tool name="Save"><SaveIcon /></Tool>
            <Tool name="Save extracts"><FitIcon /></Tool>
            <Divider />
            <Tool name="Connect"><ServerPair ok /></Tool>
            <Tool name="Disconnect"><ServerPair ok={false} /></Tool>
            <Tool name="Reload"><TimeIcon /></Tool>
            <Divider />
            <Tool name="Undo"><UndoIcon /></Tool>
            <Tool name="Redo"><RedoIcon /></Tool>
            <Divider />
            <Tool name="Auto apply" on><ExportBoxIcon /></Tool>
            <Tool name="Color palette">
              <PaletteIcon />
              <MenuMark width="5" height="3" viewBox="0 0 5 3"><path d="M0 0h5L2.500 3z" fill="#444" /></MenuMark>
            </Tool>
          </Group>
          <Group>
            <Handle />
            <Tool name="Ruler"><RulerIcon /></Tool>
          </Group>
          <Group $end>
            <Handle />
            <Tool name="Camera link"><CameraLinkIcon /></Tool>
            <Overflow type="button" aria-label="More tools"><Chevrons /></Overflow>
          </Group>
        </ToolBar>

        <ToolBar>
          <Group>
            <Handle />
            <Tool name="Show center" on><AxesEyeIcon /></Tool>
            <Tool name="Reset center"><ResetCenterIcon /></Tool>
            <Overflow type="button" $wide aria-label="More tools"><Chevrons /></Overflow>
          </Group>
          <Group><Handle /></Group>
          <Group>
            <Handle />
            <Tool name="Stripes"><StripesIcon /></Tool>
          </Group>
          <Group>
            <Handle />
            <Row $gap={1}>
              <Tool name="Mesh"><GridCubeIcon /></Tool>
              <Tool name="Shapes"><ShapesIcon /></Tool>
              <Tool name="Volume"><CubeIcon kind="solid" /></Tool>
              <Tool name="Face" on><CubeIcon kind="face" /></Tool>
              <Tool name="Edge" on><CubeIcon kind="edge" /></Tool>
              <Tool name="Vertex" on><CubeIcon kind="vertex" /></Tool>
              <Tool name="Models" on><ShapesIcon /></Tool>
              <Tool name="Groups" on><BlocksIcon /></Tool>
              <Tool name="Filter selection"><SelectFilterIcon /></Tool>
            </Row>
          </Group>
          <Group>
            <Handle />
            <Select label="Selection type" value="Entity" w={150} />
          </Group>
          <Group>
            <Handle />
            <Tool name="Light" on><BulbIcon /></Tool>
          </Group>
        </ToolBar>

        <ToolBar $h={38}>
          <Group>
            <Handle />
            <Tool name="Reset camera"><ZoomDataIcon /></Tool>
            <Tool name="Zoom to data"><ZoomCenterIcon /></Tool>
            <Tool name="Reset closest"><ZoomCircleIcon /></Tool>
            <Tool name="Zoom closest"><ZoomSquareIcon /></Tool>
            <Tool name="Zoom to box"><ZoomBoxIcon /></Tool>
            {AXES.map((a) => (
              <Tool key={a.label} name={`View ${a.label}`}><AxisIcon {...a} /></Tool>
            ))}
            <Tool name="Isometric view"><IsoIcon /></Tool>
            <Tool name="Rotate clockwise"><RotateIcon label="+90" /></Tool>
            <Tool name="Rotate counterclockwise"><RotateIcon label="-90" flip /></Tool>
          </Group>
          <Group>
            <Handle />
            <Select label="Representation" value="Surface" w={150} />
          </Group>
        </ToolBar>

        <Main>
          <Column>
            <TabStrip>
              <Tab type="button">Properties</Tab>
              <Tab type="button" $on>OpenFOAM</Tab>
            </TabStrip>
            <DockTitle><span>OpenFOAM</span><DockButtons /></DockTitle>
            <DockBody>
              <LevelRow>
                Show Level:
                <Select value="General" />
              </LevelRow>
              <TabStrip>
                {FOAM_TABS.map((t) => (
                  <Tab key={t} type="button" $soft $on={t === "Model"}>{t}</Tab>
                ))}
              </TabStrip>
              <Pane>
                <SectionTitle $first>Import Model</SectionTitle>
                <OperationBox>
                  <StatusBarMark />
                  <OperationBody>
                    <Row><Button type="button">Run</Button></Row>
                    <Rule />
                    <Row>
                      <Button type="button">Hide Data</Button>
                      <Select label="Display mode" value="Surface" w={138} />
                      <Spin>
                        <SpinInput aria-label="Opacity" defaultValue="100 %" />
                        <SpinArrows><Caret up dim w={7} /><Caret w={7} /></SpinArrows>
                      </Spin>
                      <Fill />
                      <Button type="button">Hide Others</Button>
                    </Row>
                  </OperationBody>
                </OperationBox>

                <SectionTitle>Surface Features</SectionTitle>
                <Attributes>
                  <AttrLabel htmlFor="keep-edges">Keep Edges</AttrLabel>
                  <Row $gap={4}>
                    <Select id="keep-edges" value="Inner Angle (Default)" w={214} />
                    <TextField $default aria-label="Inner angle" defaultValue="120" />
                  </Row>
                  <AttrLabel htmlFor="tolerance">surfaceFeature Tolerance</AttrLabel>
                  <Row><TextField id="tolerance" $default defaultValue="0.001" /></Row>
                  <AttrLabel htmlFor="inside-point">Inside Model Point</AttrLabel>
                  <PointBox>
                    <Check type="checkbox" id="inside-point" defaultChecked />
                    <TextField aria-label="X" defaultValue="0.5" />
                    <TextField aria-label="Y" defaultValue="0.1" />
                    <TextField aria-label="Z" defaultValue="0" />
                  </PointBox>
                </Attributes>

                <SectionTitle>surfaceFeatureExtract</SectionTitle>
                <OperationBox>
                  <StatusBarMark />
                  <OperationBody>
                    <Row>
                      <Button type="button">Run surfaceFeatureExtract</Button>
                      <Fill />
                      <span>Last run: Wed 18-Jan-2023 16:39</span>
                      <Button type="button">Show Log</Button>
                    </Row>
                    <Rule />
                  </OperationBody>
                </OperationBox>
              </Pane>
            </DockBody>
          </Column>

          <SideSplitter />

          <Column>
            <TabStrip $indent>
              <Tab type="button" $on $tight>
                <Row $gap={4}>
                  <svg width="16" height="16" viewBox="0 0 16 16"><path d="M.500 .500h15v15h-15z" fill="#fff" stroke="#333" /><path d="M0 0h16v5H0z" fill="#2e3436" /></svg>
                  Layout #1
                  <CloseBox />
                </Row>
              </Tab>
              <Tab type="button" $tight aria-label="New layout">+</Tab>
            </TabStrip>
            <ViewTools>
              <SmallTool type="button" aria-label="Camera undo"><ViewCamera kind="undo" /></SmallTool>
              <SmallTool type="button" aria-label="Camera redo"><ViewCamera kind="redo" /></SmallTool>
              <Divider $h={14} />
              <SmallTool type="button" aria-label="Capture"><ViewCamera kind="grab" /></SmallTool>
              <Divider $h={14} />
              <SmallTool type="button">3D</SmallTool>
              <SmallTool type="button" aria-label="Adjust camera"><ViewCamera kind="adjust" /></SmallTool>
              <Divider $h={14} />
              <Pick kind="plus" />
              <Pick kind="minus" />
              <Pick kind="toggle" />
              <Divider $h={14} />
              <Pick kind="cell" />
              <Pick kind="point" />
              <Pick kind="through" />
              <Pick kind="throughPts" />
              <Pick kind="poly" />
              <Pick kind="polyPts" />
              <Pick kind="block" />
              <Fill />
              <Overflow type="button" aria-label="More view tools"><Chevrons /></Overflow>
              <ViewName href="#view">RenderView1</ViewName>
              <LayoutButton type="button" aria-label="Split horizontally">
                <svg width="14" height="14" viewBox="0 0 14 14"><path d="M.500 .500h13v13H.500zM7 1v12" fill="#ccd5ee" stroke="#8f94a0" /></svg>
              </LayoutButton>
              <LayoutButton type="button" aria-label="Split vertically">
                <svg width="14" height="14" viewBox="0 0 14 14"><path d="M.500 .500h13v13H.500zM1 7h12" fill="#ccd5ee" stroke="#8f94a0" /></svg>
              </LayoutButton>
              <LayoutButton type="button" aria-label="Maximize view">
                <svg width="18" height="18" viewBox="0 0 18 18"><path d="M.500 .500h17v17H.500z" fill="#fff" stroke="#333" strokeWidth="2" /><path d="M0 0h18v5H0z" fill="#2e3436" /></svg>
              </LayoutButton>
              <LayoutButton type="button" aria-label="Close view"><CloseBox /></LayoutButton>
            </ViewTools>
            <ViewFrame>
              <ViewActive>
                <Canvas><AhmedBody /></Canvas>
              </ViewActive>
            </ViewFrame>
            <Splitter />
            <OutputDock>
              <DockTitle><span>Output Messages</span><DockButtons /></DockTitle>
              <Output>
                <LogBox>
                  <LogView role="log">
                    <LogText>{`"opencfd/openfoam-run:2112", "surfaceFeatureExtract")
INFO: surfaceextract.SurfaceFeatureExtract: operation succeeded

Started process 560617
Process  560617 finished; exit code 0
 `}</LogText>
                  </LogView>
                  <ScrollBar>
                    <ScrollArrow type="button" aria-label="Scroll up"><Caret up w={8} /></ScrollArrow>
                    <ScrollThumb />
                    <ScrollArrow type="button" aria-label="Scroll down"><Caret w={8} /></ScrollArrow>
                  </ScrollBar>
                </LogBox>
                <OutputActions>
                  <Row $gap={12}>
                    <CheckLabel><Check type="checkbox" defaultChecked />Show full messages</CheckLabel>
                    <CheckLabel $off><Check type="checkbox" disabled />Always open for new messages</CheckLabel>
                  </Row>
                  <Row>
                    <Button type="button">Copy to Clipboard</Button>
                    <Button type="button">Save to File...</Button>
                    <Button type="button">Clear</Button>
                  </Row>
                </OutputActions>
              </Output>
              <Grip width="11" height="11" viewBox="0 0 11 11" fill="#b4b4b4" aria-hidden="true">
                <path d="M9 0h1v1H9zM9 3h1v1H9zM6 3h1v1H6zM9 6h1v1H9zM6 6h1v1H6zM3 6h1v1H3zM9 9h1v1H9zM6 9h1v1H6zM3 9h1v1H3zM0 9h1v1H0z" />
              </Grip>
            </OutputDock>
          </Column>
        </Main>
      </Window>
    </>
  );
}
